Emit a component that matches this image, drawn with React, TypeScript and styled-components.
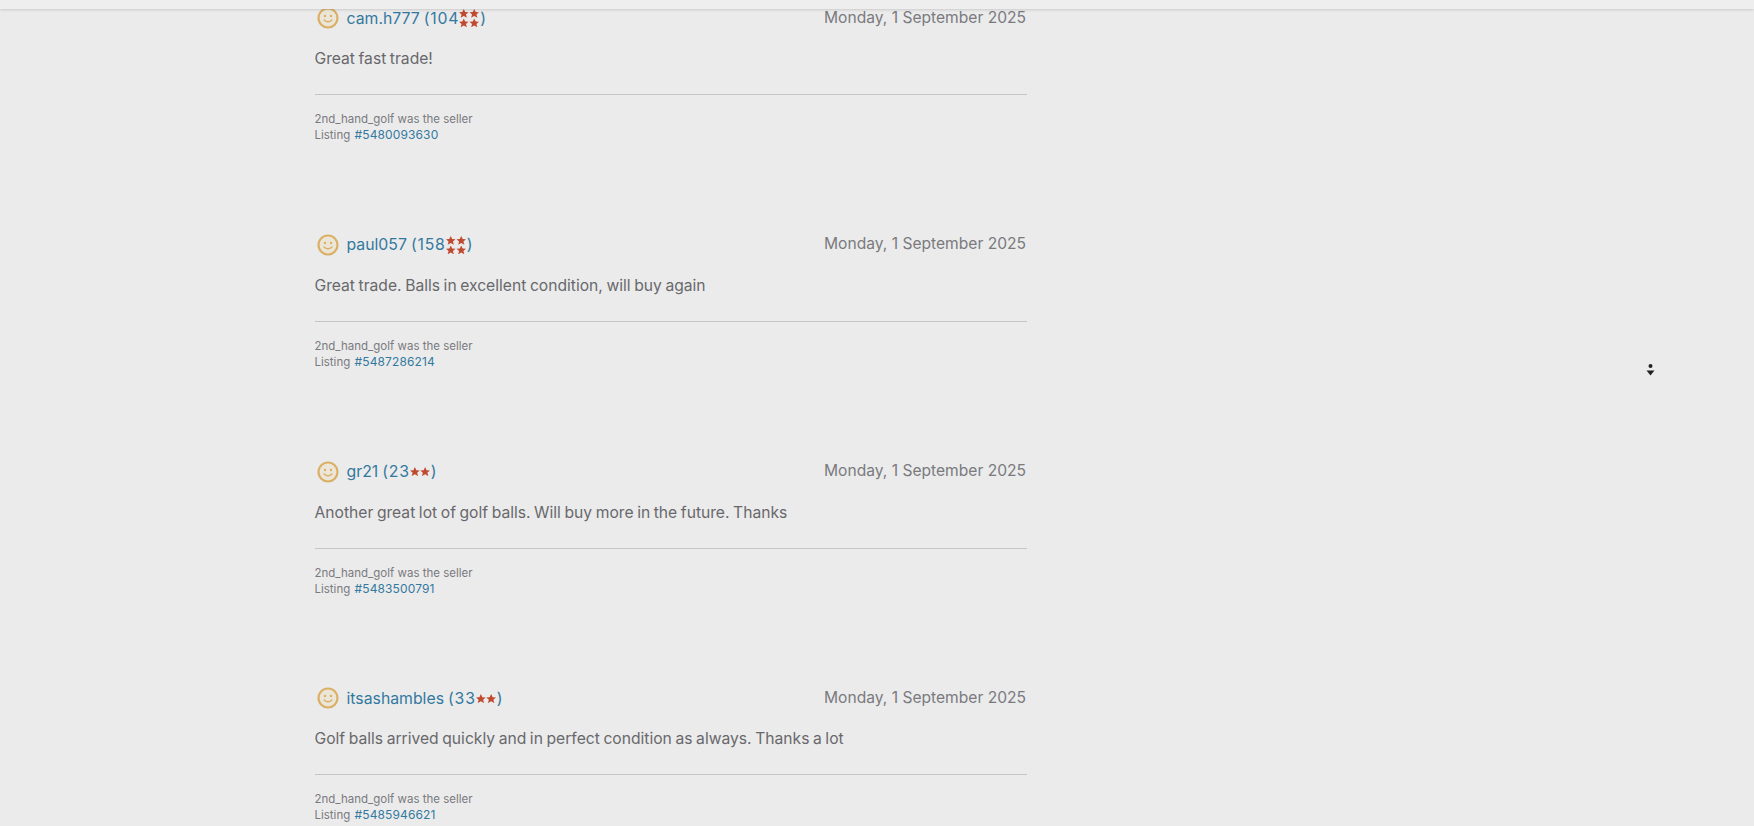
import React from "react";
import styled, { createGlobalStyle } from "styled-components";

const Global = createGlobalStyle`
  html, body { margin: 0; padding: 0; height: 100%; background: #ebebeb; overflow: hidden; }
  #root { height: 100%; }
`;

const Page = styled.div`
  position: relative;
  height: 826px;
  overflow: hidden;
  background: #ebebeb;
  font-family: Inter, "Liberation Sans", sans-serif;
  color: #65656a;
`;

const TopBar = styled.div`
  position: absolute;
  inset: 0 0 auto 0;
  height: 9px;
  background: #eeeeee;
  box-shadow: 0 1px 3px rgba(0, 0, 0, 0.14);
  z-index: 2;
`;

const Cursor = styled.svg`
  position: absolute;
  left: 1646px;
  top: 363px;
`;

const List = styled.div`
  width: 712.5px;
  margin-left: 314.5px;
  padding-top: 7px;
`;

const Row = styled.article`
  height: 226.8px;
`;

const Head = styled.div`
  display: flex;
  align-items: flex-start;
  justify-content: space-between;
  height: 22px;
`;

const User = styled.div`
  display: flex;
  align-items: center;
  height: 22px;
  padding-left: 2px;
`;

const Smile = styled.svg`
  width: 22px;
  height: 22px;
  margin-right: 8px;
  flex: none;
`;

const Name = styled.a`
  display: flex;
  align-items: center;
  color: #33799f;
  font-size: 15.8px;
  line-height: 22px;
  padding-top: 1px;
  white-space: pre;
  word-spacing: -0.4px;
`;

const Count = styled.span`
  letter-spacing: 0.8px;
`;

const Stars = styled.svg`
  flex: none;
  margin: -1px 1px 0 0;
`;

const DateText = styled.time`
  font-size: 15.6px;
  line-height: 20px;
  color: #7a7a7f;
  margin-right: 1px;
  margin-top: 0.5px;
`;

const Comment = styled.p`
  margin: 19px 0 0;
  font-size: 15.65px;
  word-spacing: -0.8px;
  line-height: 22px;
  color: #68686c;
`;

const Rule = styled.hr`
  margin: 24px 0 0;
  border: 0;
  height: 1px;
  background: #c6c6c6;
`;

const Meta = styled.div`
  margin-top: 16px;
  font-size: 11.5px;
  line-height: 16px;
  color: #7a7a7f;
`;

const ListingLink = styled.a`
  color: #33799f;
  font-size: 12px;
  letter-spacing: 0.12px;
  margin-left: 1px;
`;

const star = "M5 0 L6.5 3.1 L10 3.4 L7.3 5.7 L8.3 9.2 L5 7.4 L1.7 9.2 L2.7 5.7 L0 3.4 L3.5 3.1 Z";

function StarIcons({ n }: { n: 2 | 4 }) {
  const cells = n === 4 ? [[0, 0], [11, 0], [0, 10], [11, 10]] : [[0, 0], [10.5, 0]];
  return (
    <Stars width={20} height={n === 4 ? 18.5 : 9.2} viewBox={n === 4 ? "0 0 21 19.4" : "0 0 20.5 9.2"}>
      {cells.map(([x, y]) => (
        <path key={`${x}-${y}`} d={star} transform={`translate(${x} ${y})`} fill="#bf4a30" />
      ))}
    </Stars>
  );
}

function SmileIcon() {
  return (
    <Smile viewBox="0 0 22 22">
      <circle cx="11" cy="11" r="9.5" fill="#ece6d8" stroke="#dab066" strokeWidth="2.2" />
      <circle cx="8" cy="9" r="1.2" fill="#dab066" />
      <circle cx="14" cy="9" r="1.2" fill="#dab066" />
      <path d="M7 13 Q11 16.5 15 13" fill="none" stroke="#dab066" strokeWidth="1.4" strokeLinecap="round" />
    </Smile>
  );
}

const rows: { user: string; count: number; stars: 2 | 4; text: string; listing: string }[] = [
  { user: "cam.h777", count: 104, stars: 4, text: "Great fast trade!", listing: "5480093630" },
  { user: "paul057", count: 158, stars: 4, text: "Great trade. Balls in excellent condition, will buy again", listing: "5487286214" },
  { user: "gr21", count: 23, stars: 2, text: "Another great lot of golf balls. Will buy more in the future. Thanks", listing: "5483500791" },
  { user: "itsashambles", count: 33, stars: 2, text: "Golf balls arrived quickly and in perfect condition as always. Thanks a lot", listing: "5485946621" },
];

export default function App() {
  return (
    <Page>
      <Global />
      <TopBar />
      <List>
        {rows.map((r) => (
          <Row key={r.listing}>
            <Head>
              <User>
                <SmileIcon />
                <Name>
                  {`${r.user} `}
                  <Count>{`(${r.count}`}</Count>
                  <StarIcons n={r.stars} />)
                </Name>
              </User>
              <DateText>Monday, 1 September 2025</DateText>
            </Head>
            <Comment>{r.text}</Comment>
            <Rule />
            <Meta>
              2nd_hand_golf was the seller
              <br />
              Listing <ListingLink>#{r.listing}</ListingLink>
            </Meta>
          </Row>
        ))}
      </List>
      <Cursor width="9" height="14" viewBox="0 0 9 14">
        <circle cx="4.5" cy="3" r="2" fill="#222" />
        <path d="M0.5 7.5 L8.5 7.5 L4.5 12.5 Z" fill="#222" />
      </Cursor>
    </Page>
  );
}
